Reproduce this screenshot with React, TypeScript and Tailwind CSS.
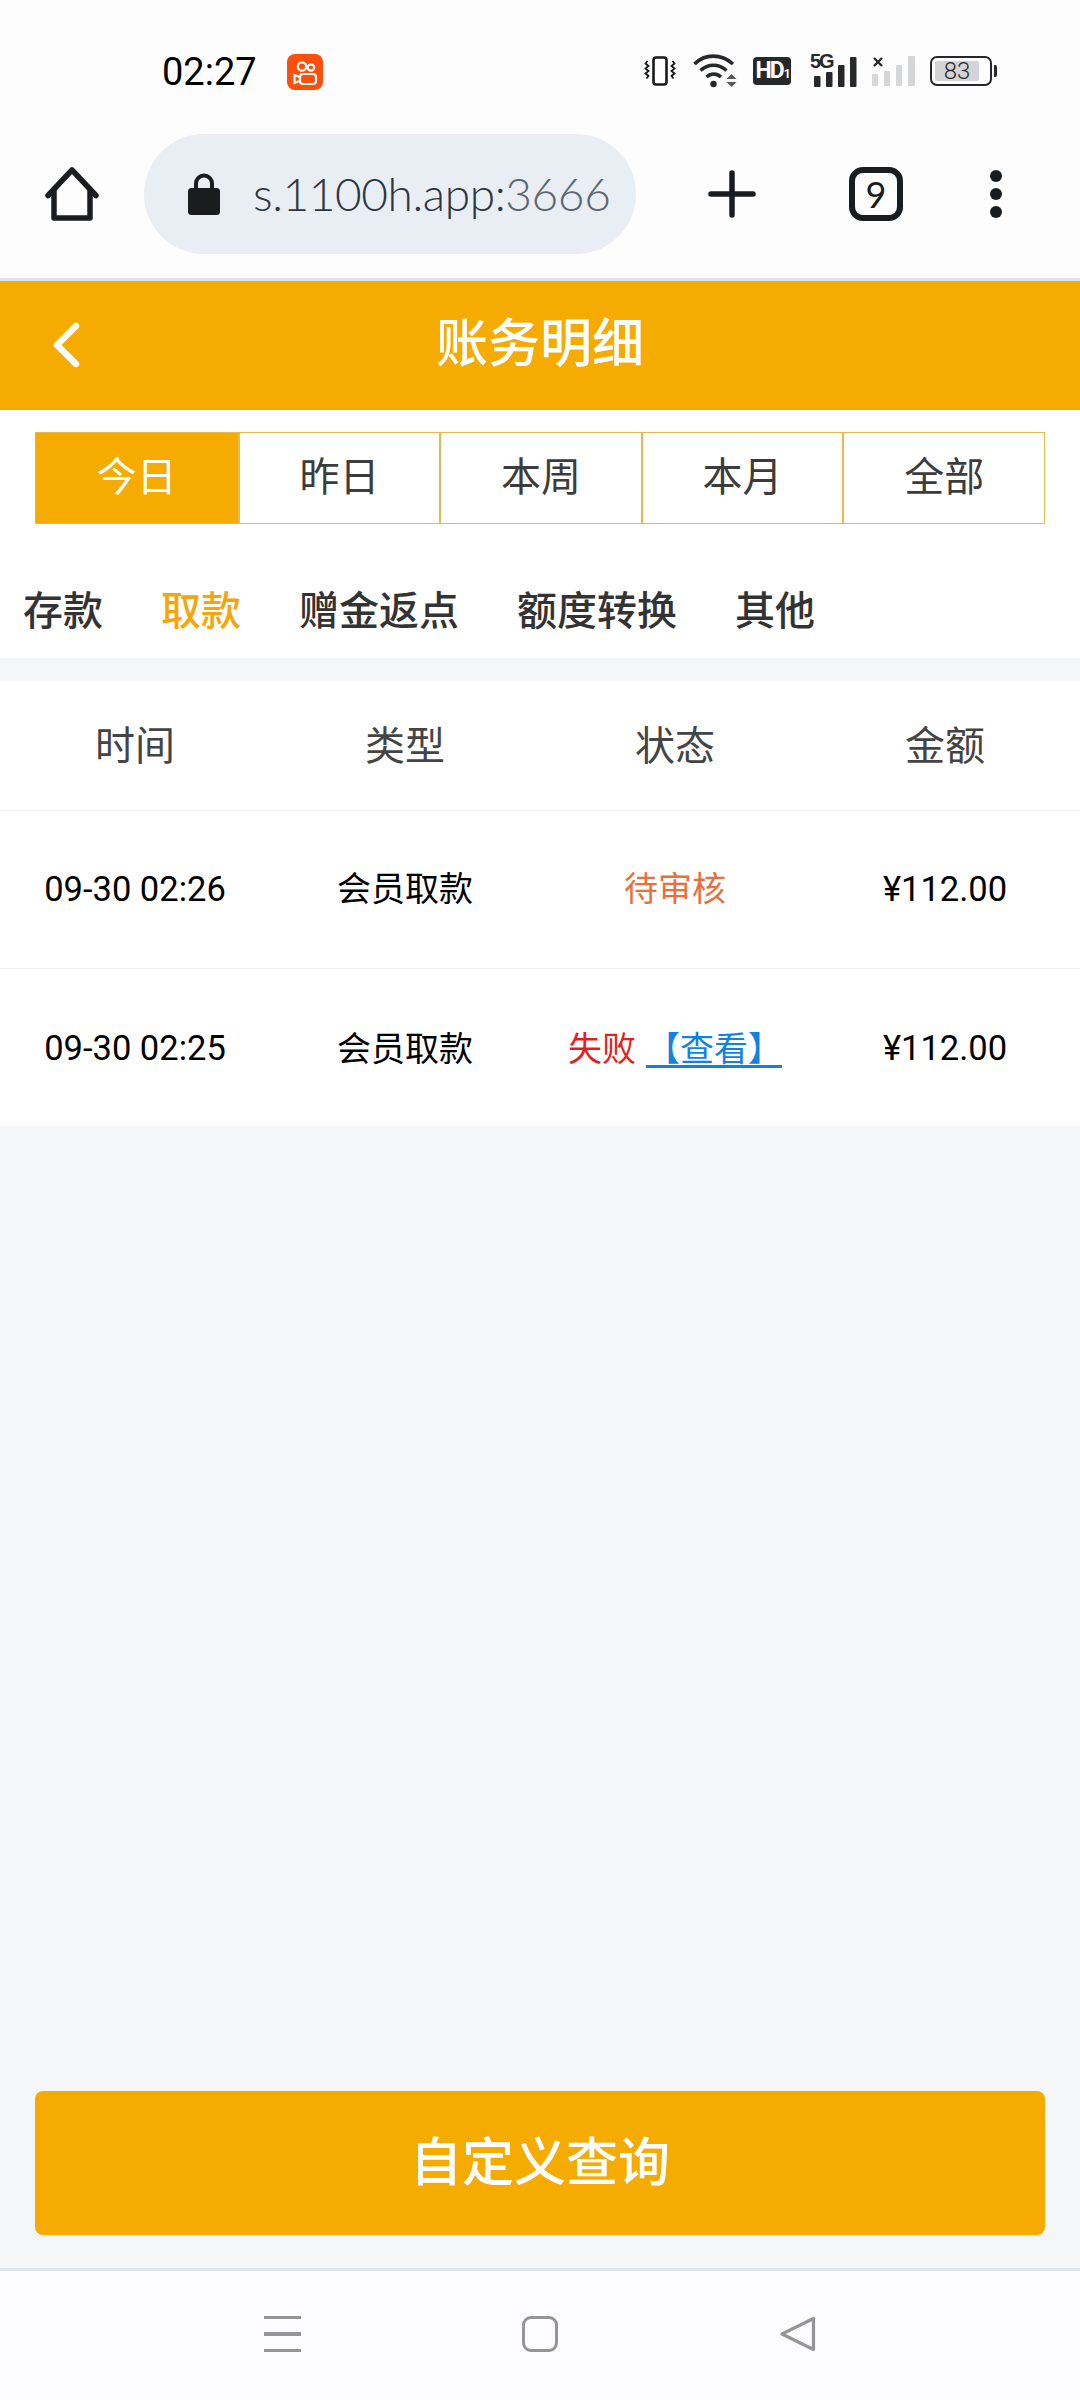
import React from "react";

const periods = ["今日", "昨日", "本周", "本月", "全部"];
const kinds = ["存款", "取款", "赠金返点", "额度转换", "其他"];
const columns = ["时间", "类型", "状态", "金额"];

const KuaishouBadge = () => (
  <svg width="36" height="36" viewBox="0 0 36 36">
    <rect width="36" height="36" rx="8" fill="#fb4f0e" />
    <g fill="none" stroke="#fff" strokeWidth="2.2">
      <circle cx="15" cy="12.5" r="4.2" />
      <circle cx="24" cy="13.5" r="3.2" />
      <rect x="13" y="20" width="16" height="10" rx="3" />
      <path d="M12.5 23l-5-2v8l5-2" />
    </g>
  </svg>
);

const StatusIcons = () => (
  <div className="flex items-center">
    {/* vibrate */}
    <svg width="32" height="30" viewBox="0 0 32 30" fill="none" stroke="#16181b">
      <rect x="9.5" y="1.5" width="13" height="27" rx="2.5" strokeWidth="2.6" />
      <path d="M3.5 5l-2 2.5 3 2.500-3 2.500 3 2.500-3 2.500 3 2.500-2 2.500M28.500 5l2 2.500-3 2.500 3 2.500-3 2.500 3 2.500-3 2.500 2 2.500" strokeWidth="1.8" />
    </svg>
    {/* wifi */}
    <svg className="ml-[17px]" width="44" height="34" viewBox="0 0 44 34" fill="none">
      <path d="M1.500 10C12 -0.500 28 -0.500 40 10M7.500 16.500C15 9.500 26 9.500 33.500 16.500M13.500 23C18 19 23.500 19 28 23" stroke="#26282b" strokeWidth="3.600" />
      <circle cx="20.500" cy="30" r="3.200" fill="#26282b" />
      <path d="M38.500 20l5 5h-10zM33.500 28h10l-5 5z" fill="#55585c" />
    </svg>
    {/* HD */}
    <div className="ml-[16px] flex h-[28px] w-[38px] items-center justify-center rounded-[4px] bg-[#26282b] text-[23px] font-bold tracking-[-2px] text-white">
      HD<span className="ml-[1px] mt-[6px] text-[12px]">1</span>
    </div>
    {/* sim 1 */}
    <div className="relative ml-[19px] h-[32px] w-[47px]">
      <span className="absolute left-0 top-[-4px] text-[20px] font-bold leading-[20px] tracking-[-2px] text-[#26282b] [font-family:'Liberation_Sans',sans-serif]">5G</span>
      <svg className="absolute left-0 top-0" width="47" height="32" viewBox="0 0 47 32" fill="#26282b">
        <rect x="4" y="21" width="6.500" height="11" rx="1" />
        <rect x="16" y="17" width="6.500" height="15" rx="1" />
        <rect x="28" y="10" width="6.500" height="22" rx="1" />
        <rect x="40" y="2" width="6.500" height="30" rx="1" />
      </svg>
    </div>
    {/* sim 2 */}
    <svg className="ml-[15px]" width="43" height="30" viewBox="0 0 43 30">
      <path d="M2 2l8 8M10 2l-8 8" stroke="#26282b" strokeWidth="2.400" />
      <g fill="#d5d6d8">
        <rect x="0" y="18" width="6" height="12" rx="1" />
        <rect x="12" y="15" width="6" height="15" rx="1" />
        <rect x="24" y="9" width="6" height="21" rx="1" />
        <rect x="36" y="0" width="7" height="30" rx="1" />
      </g>
    </svg>
    {/* battery */}
    <div className="relative ml-[15px] flex h-[30px] w-[62px] items-center rounded-[7px] border-2 border-[#26282b] pl-[3px]">
      <div className="flex h-[20px] w-[44px] items-center justify-center rounded-[2px] bg-[#d4d4d6] text-[24px] font-light leading-none text-[#2a2c2f]">83</div>
      <span className="absolute right-[-7px] top-[7px] h-[12px] w-[3px] rounded-r-[2px] bg-[#26282b]" />
    </div>
  </div>
);

const HomeIcon = () => (
  <svg width="54" height="54" viewBox="0 0 54 54" fill="none" stroke="#1a1d20" strokeWidth="5.500" strokeLinejoin="round" strokeLinecap="round">
    <path d="M3 28.500L27 3l24 25.500" />
    <path d="M9 24v27h36V24" />
  </svg>
);

const LockIcon = () => (
  <svg width="32" height="42" viewBox="0 0 32 42">
    <path d="M8 18V10.500a8 8 0 0 1 16 0V18" fill="none" stroke="#1a1d20" strokeWidth="4" />
    <rect y="15" width="32" height="27" rx="3.500" fill="#1a1d20" />
  </svg>
);

const Toolbar = () => (
  <div className="flex h-[144px] items-start pl-[45px]">
    <div className="mt-[33px]">
      <HomeIcon />
    </div>
    <div className="ml-[45px] flex h-[120px] w-[492px] items-center rounded-[60px] bg-[#e8eef3] pl-[44px]">
      <LockIcon />
      <span className="ml-[33px] text-[46px] font-light leading-none tracking-[-0.4px] text-[#2c3640] [font-family:Lato,sans-serif]">
        s.1100h.app:<span className="text-[#5a6570]">3666</span>
      </span>
    </div>
    <svg className="ml-[72px] mt-[36px]" width="48" height="48" viewBox="0 0 48 48" stroke="#1a1d20" strokeWidth="5.500" strokeLinecap="round">
      <path d="M3 24h42M24 3v42" />
    </svg>
    <div className="ml-[93px] mt-[33px] flex h-[54px] w-[54px] items-center justify-center rounded-[14px] border-[6px] border-[#1a1d20] text-[36px] leading-none text-[#1a1d20] [font-family:Lato,sans-serif]">
      9
    </div>
    <div className="ml-[87px] mt-[36px] flex flex-col gap-[6px]">
      <span className="h-[12px] w-[12px] rounded-full bg-[#1a1d20]" />
      <span className="h-[12px] w-[12px] rounded-full bg-[#1a1d20]" />
      <span className="h-[12px] w-[12px] rounded-full bg-[#1a1d20]" />
    </div>
  </div>
);

const BottomNav = () => (
  <div className="flex h-[132px] items-start border-t-[3px] border-[#dfe5e8] bg-[#fcfcfe] pl-[264px] pt-[45px]">
    <div className="flex h-[36px] w-[37px] flex-col justify-between">
      <span className="h-[3px] bg-[#959595]" />
      <span className="h-[4px] bg-[#959595]" />
      <span className="h-[3px] bg-[#959595]" />
    </div>
    <span className="ml-[221px] h-[36px] w-[36px] rounded-[9px] border-[3px] border-[#959595]" />
    <svg className="ml-[222px]" width="36" height="36" viewBox="0 0 36 36" fill="none" stroke="#959595" strokeWidth="3.200" strokeLinejoin="round">
      <path d="M33.500 2.500v31L2 18z" />
    </svg>
  </div>
);

const App = () => {
  return (
    <div className="flex h-[2400px] flex-col bg-[#f4f6f8] font-['Roboto','Noto_Sans_CJK_SC',sans-serif]">
      <div className="border-b-[3px] border-[#e1e4e4] bg-[#fdfdfe]">
        <div className="flex h-[134px] items-start justify-between pl-[162px] pr-[88px] pt-[54px]">
          <div className="flex items-center">
            <span className="text-[38px] leading-[36px] text-black">02:27</span>
            <span className="ml-[30px] block h-[36px]">
              <KuaishouBadge />
            </span>
          </div>
          <StatusIcons />
        </div>
        <Toolbar />
      </div>

      {/* page header */}
      <header className="relative flex h-[129px] items-center justify-center bg-[#f6ab00] pb-[2px]">
        <svg className="absolute left-[52px] top-[41px]" width="28" height="46" viewBox="0 0 28 46" fill="none" stroke="#fff" strokeWidth="6.500" strokeLinecap="round" strokeLinejoin="round">
          <path d="M24 4L5 23l19 19" />
        </svg>
        <h1 className="text-[52px] font-medium leading-none text-white">账务明细</h1>
      </header>

      <div className="bg-white">
        <div className="mx-[35px] mt-[22px] grid h-[92px] grid-cols-5 border border-[#e5b94e]">
          {periods.map((label, i) => (
            <div
              key={label}
              className={
                i === 0
                  ? "flex items-center justify-center bg-[#f6ab00] text-[40px] text-white"
                  : "flex items-center justify-center border-l-2 border-[#e5b94e] text-[40px] text-[#3c3c3c]"
              }
            >
              {label}
            </div>
          ))}
        </div>
        <div className="flex h-[134px] items-center gap-[58px] pl-[23px] pt-[42px]">
          {kinds.map((label, i) => (
            <span
              key={label}
              className={
                i === 1
                  ? "text-[40px] font-medium leading-none text-[#f5a60e]"
                  : "text-[40px] font-medium leading-none text-[#333]"
              }
            >
              {label}
            </span>
          ))}
        </div>
      </div>

      {/* transaction table */}
      <div className="mt-[23px] bg-white">
        <div className="grid h-[129px] grid-cols-4 items-center pt-[2px] text-center text-[40px] text-[#444]">
          {columns.map((c) => (
            <span key={c}>{c}</span>
          ))}
        </div>
        <div className="grid h-[158px] grid-cols-4 items-center border-t border-[#eeeeee] text-center text-[34.5px] text-black">
          <span>09-30 02:26</span>
          <span className="text-[34px]">会员取款</span>
          <span className="text-[34px] text-[#e8703f]">待审核</span>
          <span>¥112.00</span>
        </div>
        <div className="grid h-[158px] grid-cols-4 items-center border-t border-[#eeeeee] pt-[3px] text-center text-[34.5px] text-black">
          <span>09-30 02:25</span>
          <span className="text-[34px]">会员取款</span>
          <span className="text-[34px] text-[#e21f1f]">
            失败
            <a className="ml-[10px] text-[#1083e0] underline decoration-[3px] underline-offset-[4px] [text-decoration-skip-ink:none]">【查看】</a>
          </span>
          <span>¥112.00</span>
        </div>
      </div>

      <div className="mt-auto px-[35px] pb-[33px]">
        <button className="h-[144px] w-full rounded-[8px] bg-[#f6ab00] pt-[2px] text-[52px] font-medium text-white">自定义查询</button>
      </div>
      <BottomNav />
    </div>
  );
};

export default App;
